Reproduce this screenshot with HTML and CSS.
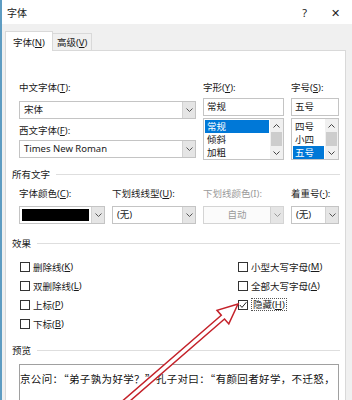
FILE: index.html
```html
<!DOCTYPE html>
<html lang="zh-CN">
<head>
<meta charset="utf-8">
<title>字体</title>
<link rel="stylesheet" href="styles.css">
</head>
<body>
<div class="window">
  <div class="titlebar">
    <span class="title">字体</span>
    <span class="tb-btns"><span class="help">?</span><span class="close">✕</span></span>
  </div>
  <div class="tabs">
    <div class="tab active">字体(<u>N</u>)</div>
    <div class="tab">高级(<u>V</u>)</div>
  </div>
  <div class="panel">
    <div class="row1">
      <div class="col">
        <div class="lbl">中文字体(<u>T</u>):</div>
        <div class="combo mt5"><span class="val">宋体</span><span class="dd"><svg width="7" height="4" viewBox="0 0 7 4"><path d="M0.5 0.5 L3.5 3.5 L6.5 0.5" fill="none" stroke="#555" stroke-width="1"/></svg></span></div>
        <div class="lbl mt4">西文字体(<u>F</u>):</div>
        <div class="combo mt1"><span class="val">Times New Roman</span><span class="dd"><svg width="7" height="4" viewBox="0 0 7 4"><path d="M0.5 0.5 L3.5 3.5 L6.5 0.5" fill="none" stroke="#555" stroke-width="1"/></svg></span></div>
      </div>
      <div class="col">
        <div class="lbl">字形(<u>Y</u>):</div>
        <div class="input mt2">常规</div>
        <div class="list mt2">
          <div class="items">
            <div class="item sel">常规</div>
            <div class="item">倾斜</div>
            <div class="item">加粗</div>
          </div>
          <div class="sbar">
            <span class="sb-btn"><svg width="7" height="4" viewBox="0 0 7 4"><path d="M0.5 3.5 L3.5 0.5 L6.5 3.5" fill="none" stroke="#444" stroke-width="1"/></svg></span>
            <span class="sb-thumb"></span>
            <span class="sb-btn"><svg width="7" height="4" viewBox="0 0 7 4"><path d="M0.5 0.5 L3.5 3.5 L6.5 0.5" fill="none" stroke="#444" stroke-width="1"/></svg></span>
          </div>
        </div>
      </div>
      <div class="col">
        <div class="lbl">字号(<u>S</u>):</div>
        <div class="input mt2">五号</div>
        <div class="list mt2">
          <div class="items">
            <div class="item">四号</div>
            <div class="item">小四</div>
            <div class="item sel">五号</div>
          </div>
          <div class="sbar">
            <span class="sb-btn"><svg width="7" height="4" viewBox="0 0 7 4"><path d="M0.5 3.5 L3.5 0.5 L6.5 3.5" fill="none" stroke="#444" stroke-width="1"/></svg></span>
            <span class="sb-thumb"></span>
            <span class="sb-btn"><svg width="7" height="4" viewBox="0 0 7 4"><path d="M0.5 0.5 L3.5 3.5 L6.5 0.5" fill="none" stroke="#444" stroke-width="1"/></svg></span>
          </div>
        </div>
      </div>
    </div>

    <div class="ghead ghead-first">所有文字</div>
    <div class="row2">
      <div class="col">
        <div class="lbl">字体颜色(<u>C</u>):</div>
        <div class="combo mt4"><span class="swatch"></span><span class="dd"><svg width="7" height="4" viewBox="0 0 7 4"><path d="M0.5 0.5 L3.5 3.5 L6.5 0.5" fill="none" stroke="#555" stroke-width="1"/></svg></span></div>
      </div>
      <div class="col">
        <div class="lbl">下划线线型(<u>U</u>):</div>
        <div class="combo mt4"><span class="val">(无)</span><span class="dd"><svg width="7" height="4" viewBox="0 0 7 4"><path d="M0.5 0.5 L3.5 3.5 L6.5 0.5" fill="none" stroke="#555" stroke-width="1"/></svg></span></div>
      </div>
      <div class="col">
        <div class="lbl disabled">下划线颜色(I):</div>
        <div class="combo mt4 combo-dis"><span class="val center">自动</span><span class="dd"><svg width="7" height="4" viewBox="0 0 7 4"><path d="M0.5 0.5 L3.5 3.5 L6.5 0.5" fill="none" stroke="#999" stroke-width="1"/></svg></span></div>
      </div>
      <div class="col">
        <div class="lbl">着重号(<u>·</u>):</div>
        <div class="combo mt4"><span class="val">(无)</span><span class="dd"><svg width="7" height="4" viewBox="0 0 7 4"><path d="M0.5 0.5 L3.5 3.5 L6.5 0.5" fill="none" stroke="#555" stroke-width="1"/></svg></span></div>
      </div>
    </div>

    <div class="ghead ghead-effects">效果</div>
    <div class="effects">
      <label class="cb"><span class="box"></span>删除线(<u>K</u>)</label>
      <label class="cb"><span class="box"></span>小型大写字母(<u>M</u>)</label>
      <label class="cb"><span class="box"></span>双删除线(<u>L</u>)</label>
      <label class="cb"><span class="box"></span>全部大写字母(<u>A</u>)</label>
      <label class="cb"><span class="box"></span>上标(<u>P</u>)</label>
      <label class="cb"><span class="box checked"><svg width="8" height="8" viewBox="0 0 8 8"><path d="M0.8 4 L3 6.4 L7.4 1.2" fill="none" stroke="#222" stroke-width="1"/></svg></span><span class="focus">隐藏(<u>H</u>)</span></label>
      <label class="cb"><span class="box"></span>下标(<u>B</u>)</label>
    </div>

    <div class="ghead ghead-preview">预览</div>
    <div class="preview">京公问：“弟子孰为好学？”孔子对曰：“有颜回者好学，不迁怒，</div>
  </div>

  <svg class="arrow" width="352" height="400" viewBox="0 0 352 400">
    <polygon points="238,304 228.8,323.9 224.5,319 123.2,406.9 120,403.1 221.3,315.2 217,310.3" fill="#fff" stroke="#c4222a" stroke-width="1.5" stroke-linejoin="miter"/>
  </svg>
</div>
</body>
</html>
```

FILE: styles.css
```css
* {
  box-sizing: border-box;
  margin: 0;
  padding: 0;
}

html, body {
  width: 352px;
  height: 400px;
  overflow: hidden;
  background: #fff;
}

body {
  font-family: "Noto Sans", "Noto Sans CJK SC", sans-serif;
  font-size: 9.5px;
  color: #1a1a1a;
}

u {
  text-decoration: underline;
  text-underline-offset: 1px;
}

.window {
  position: relative;
  width: 352px;
  height: 400px;
  background: #f0f0f0;
  border-left: 2px solid #5e9cc2;
  display: flex;
  flex-direction: column;
  overflow: hidden;
}

.titlebar {
  height: 24px;
  flex: none;
  background: #fff;
  display: flex;
  align-items: center;
  justify-content: space-between;
  padding: 0 12px 0 5px;
  font-size: 10px;
}

.tb-btns {
  display: flex;
  align-items: center;
  gap: 24px;
  color: #222;
}

.help {
  font-size: 11px;
}

.close {
  font-size: 11px;
}

.tabs {
  height: 26px;
  flex: none;
  display: flex;
  align-items: flex-end;
  padding-left: 3px;
  position: relative;
  z-index: 2;
}

.tab {
  height: 17px;
  padding: 1px 4px 0;
  border: 1px solid #d9d9d9;
  border-bottom: none;
  border-left: none;
  background: #f0f0f0;
  line-height: 15px;
  white-space: nowrap;
}

.tab.active {
  height: 20px;
  background: #fff;
  border-left: 1px solid #d9d9d9;
  margin-bottom: -1px;
  padding: 3px 7px 0;
  line-height: 16px;
}

.panel {
  flex: 1;
  background: #fff;
  border: 1px solid #d9d9d9;
  margin: 0 6px 0 3px;
  padding: 29px 0 0 6px;
  position: relative;
  z-index: 1;
}

.row1 {
  display: grid;
  grid-template-columns: 177px 81px 48px;
  column-gap: 7px;
  padding-left: 7px;
}

.row2 {
  display: grid;
  grid-template-columns: 86px 84px 81px 48px;
  column-gap: 7px;
  padding-left: 7px;
  margin-top: 4px;
}

.col {
  display: flex;
  flex-direction: column;
}

.lbl {
  height: 16px;
  line-height: 16px;
  white-space: nowrap;
}

.lbl.disabled {
  color: #9a9a9a;
}

.mt1 { margin-top: 1px; }
.mt2 { margin-top: 2px; }
.mt4 { margin-top: 4px; }
.mt5 { margin-top: 5px; }

.combo {
  height: 18px;
  border: 1px solid #c4c4c4;
  background: #fff;
  display: flex;
  align-items: stretch;
}

.combo .val {
  flex: 1;
  padding-left: 4px;
  line-height: 16px;
  white-space: nowrap;
  overflow: hidden;
}

.combo .val.center {
  text-align: center;
  padding-left: 0;
  color: #9a9a9a;
}

.combo-dis {
  background: #fbfbfb;
  border-color: #d4d4d4;
}

.dd {
  width: 13px;
  flex: none;
  background: #e5e5e5;
  border-left: 1px solid #d2d2d2;
  display: flex;
  align-items: center;
  justify-content: center;
}

.swatch {
  flex: 1;
  margin: 2px;
  background: #000;
}

.input {
  height: 18px;
  border: 1px solid #c4c4c4;
  padding-left: 3px;
  line-height: 16px;
  background: #fff;
}

.list {
  height: 42px;
  border: 1px solid #c4c4c4;
  display: flex;
  background: #fff;
}

.items {
  flex: 1;
  padding: 1px 1px 0 1px;
}

.item {
  height: 13px;
  line-height: 13px;
  padding-left: 2px;
  white-space: nowrap;
}

.item.sel {
  background: #0078d7;
  color: #fff;
}

.sbar {
  width: 13px;
  flex: none;
  display: flex;
  flex-direction: column;
  background: #f0f0f0;
}

.sb-btn {
  height: 13px;
  display: flex;
  align-items: center;
  justify-content: center;
}

.sb-thumb {
  flex: 1;
  margin: 0 1px;
  background: #cdcdcd;
}

.ghead {
  display: flex;
  align-items: center;
  height: 16px;
  padding-right: 5px;
  white-space: nowrap;
}

.ghead::after {
  content: "";
  flex: 1;
  border-top: 1px solid #dedede;
  margin-left: 6px;
}

.ghead-first {
  margin-top: 6px;
}

.ghead-effects {
  margin-top: 11px;
}

.ghead-preview {
  margin-top: 9px;
}

.effects {
  display: grid;
  grid-template-columns: 218px 1fr;
  grid-auto-rows: 19px;
  margin-top: 6px;
  padding-left: 8px;
}

.cb {
  display: flex;
  align-items: center;
  white-space: nowrap;
}

.box {
  width: 10px;
  height: 10px;
  border: 1px solid #333;
  background: #fff;
  margin-right: 3px;
  flex: none;
  display: flex;
  align-items: center;
  justify-content: center;
}

.focus {
  border: 1px dotted #555;
  padding: 0 1px;
  line-height: 11px;
}

.preview {
  margin: 6px 0 0 7px;
  width: 320px;
  height: 60px;
  border: 1px solid #a0a0a0;
  padding-top: 6px;
  font-family: "Noto Sans CJK SC", sans-serif;
  font-size: 10.5px;
  letter-spacing: 0.35px;
  line-height: 16px;
  white-space: nowrap;
  overflow: hidden;
  color: #111;
}

.arrow {
  position: absolute;
  left: -2px;
  top: 0;
  z-index: 5;
  pointer-events: none;
}
```
